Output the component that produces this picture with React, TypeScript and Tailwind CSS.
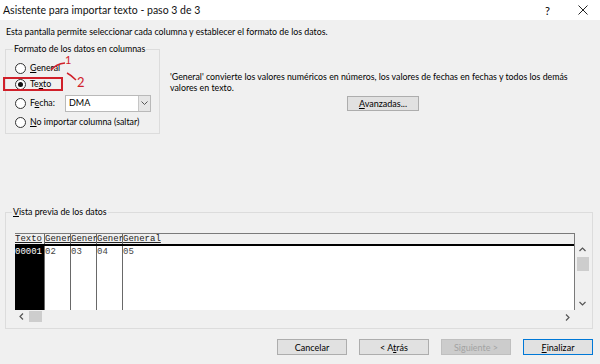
import React from "react";

const ui = { fontFamily: 'Lato, "Noto Sans", Arial, sans-serif' };
const mono = { fontFamily: '"Liberation Mono", "DejaVu Sans Mono", monospace' };

function Radio({ checked }: { checked?: boolean }) {
  return (
    <span className="w-[11px] h-[11px] rounded-full border border-[#333] bg-white flex items-center justify-center shrink-0">
      {checked && <span className="w-[5px] h-[5px] rounded-full bg-[#111]" />}
    </span>
  );
}

function Btn({ children, variant }: { children: React.ReactNode; variant?: "default" | "disabled" }) {
  const cls =
    variant === "default"
      ? "border-[#0078d7] bg-[#e1e1e1] text-black"
      : variant === "disabled"
      ? "border-[#bfbfbf] bg-[#cccccc] text-[#a3a3a3]"
      : "border-[#adadad] bg-[#e1e1e1] text-black";
  return (
    <div className={`w-[70px] h-[16px] border flex items-center justify-center text-[9px] leading-none whitespace-nowrap ${cls}`}>
      {children}
    </div>
  );
}

export default function App() {
  return (
    <div className="relative w-[600px] h-[364px] overflow-hidden text-black" style={ui}>
      {/* Title bar */}
      <div className="h-[20px] bg-white flex items-center justify-between pl-[3px] pr-[12px]">
        <span className="text-[10.5px] leading-none text-[#111]">Asistente para importar texto - paso 3 de 3</span>
        <div className="flex items-center gap-[28px]">
          <span className="text-[11px] leading-none">?</span>
          <svg width="10" height="10" viewBox="0 0 10 10">
            <path d="M0.5 0.5 L9.5 9.5 M9.5 0.5 L0.5 9.5" stroke="#222" strokeWidth="1" />
          </svg>
        </div>
      </div>

      {/* Body */}
      <div className="bg-[#f0f0f0] h-[344px] px-[5px] flex flex-col">
        <p className="mt-[6px] pl-[1px] text-[8.8px] leading-[12px] whitespace-nowrap">
          Esta pantalla permite seleccionar cada columna y establecer el formato de los datos.
        </p>

        <div className="flex mt-[5px]">
          <fieldset className="w-[155px] h-[91px] border border-[#dcdcdc] px-[6px] shrink-0">
            <legend className="ml-[1px] px-[1px] text-[8.8px] leading-[12px] whitespace-nowrap">Formato de los datos en columnas</legend>
            <div className="pt-[5px] text-[8.8px] whitespace-nowrap">
              <div className="h-[16px] flex items-center gap-[4px] pl-[3px]">
                <Radio />
                <span><u>G</u>eneral</span>
              </div>
              <div className="h-[16px] flex items-center gap-[4px] pl-[3px]">
                <Radio checked />
                <span>Te<u>x</u>to</span>
              </div>
              <div className="mt-[1px] h-[20px] flex items-center pl-[3px]">
                <div className="flex items-center gap-[4px] w-[50px]">
                  <Radio />
                  <span>F<u>e</u>cha:</span>
                </div>
                <div className="w-[86px] h-[17px] border border-[#b9b9b9] bg-white flex items-center">
                  <span className="flex-1 pl-[3px] text-[9px]">DMA</span>
                  <span className="w-[12px] h-full bg-[#e6e6e6] border-l border-[#c6c6c6] flex items-center justify-center">
                    <svg width="7" height="4" viewBox="0 0 7 4">
                      <path d="M0.5 0.5 L3.5 3.5 L6.5 0.5" stroke="#555" fill="none" strokeWidth="1" />
                    </svg>
                  </span>
                </div>
              </div>
              <div className="mt-[1px] h-[16px] flex items-center gap-[4px] pl-[3px]">
                <Radio />
                <span><u>N</u>o importar columna (saltar)</span>
              </div>
            </div>
          </fieldset>

          <div className="ml-[10px] mt-[28px] text-[8.8px] leading-[11px]">
            <p className="whitespace-nowrap">
              'General' convierte los valores numéricos en números, los valores de fechas en fechas y todos los demás
              <br />
              valores en texto.
            </p>
            <div className="mt-[3px] ml-[177px] w-[72px] h-[15px] border border-[#adadad] bg-[#e1e1e1] flex items-center justify-center text-[9px] leading-none">
              <span><u>A</u>vanzadas...</span>
            </div>
          </div>
        </div>

        {/* Preview */}
        <fieldset className="mt-[72px] w-[588px] h-[123px] border border-[#dcdcdc]">
          <legend className="ml-[6px] px-[1px] text-[8.8px] leading-[12px]"><u>V</u>ista previa de los datos</legend>
          <div className="pl-[9px] pt-[15px]">
            <div className="grid grid-cols-[560px_15px] grid-rows-[77px_12px]">
              {/* Table */}
              <div className="border-t border-r border-[#7a7a7a] flex flex-col bg-white overflow-hidden" style={mono}>
                <div className="h-[12px] flex bg-[#f0f0f0] border-b-2 border-black text-[9px] leading-[11px] text-[#222]">
                  <div className="w-[30px] overflow-hidden whitespace-nowrap border-r border-[#696969] underline">Texto</div>
                  <div className="w-[26px] overflow-hidden whitespace-nowrap border-r border-[#696969] underline">Gener</div>
                  <div className="w-[26px] overflow-hidden whitespace-nowrap border-r border-[#696969] underline">Gener</div>
                  <div className="w-[26px] overflow-hidden whitespace-nowrap border-r border-[#696969] underline">Gener</div>
                  <div className="flex-1 overflow-hidden whitespace-nowrap underline">General</div>
                </div>
                <div className="flex-1 flex text-[9px] leading-[12px]">
                  <div className="w-[30px] bg-black text-white border-r border-[#696969]">00001</div>
                  <div className="w-[26px] border-r border-[#696969] text-[#444]">02</div>
                  <div className="w-[26px] border-r border-[#696969] text-[#444]">03</div>
                  <div className="w-[26px] border-r border-[#696969] text-[#444]">04</div>
                  <div className="flex-1 text-[#444]">05</div>
                </div>
              </div>
              {/* Vertical scrollbar */}
              <div className="flex flex-col items-center pt-[12px]">
                <svg width="7" height="5" viewBox="0 0 7 5" className="mt-[2px]">
                  <path d="M0.5 4 L3.5 1 L6.5 4" stroke="#555" fill="none" strokeWidth="1.2" />
                </svg>
                <div className="mt-[5px] w-[12px] h-[14px] bg-[#cdcdcd]" />
                <div className="flex-1" />
                <svg width="7" height="5" viewBox="0 0 7 5" className="mb-[4px]">
                  <path d="M0.5 1 L3.5 4 L6.5 1" stroke="#555" fill="none" strokeWidth="1.2" />
                </svg>
              </div>
              {/* Horizontal scrollbar */}
              <div className="flex items-center">
                <svg width="5" height="7" viewBox="0 0 5 7" className="ml-[4px]">
                  <path d="M4 0.5 L1 3.5 L4 6.5" stroke="#555" fill="none" strokeWidth="1.2" />
                </svg>
                <div className="ml-[5px] w-[13px] h-[11px] bg-[#cdcdcd]" />
                <div className="flex-1" />
                <svg width="5" height="7" viewBox="0 0 5 7" className="mr-[5px] mt-[2px]">
                  <path d="M1 0.5 L4 3.5 L1 6.5" stroke="#555" fill="none" strokeWidth="1.2" />
                </svg>
              </div>
              <div />
            </div>
          </div>
        </fieldset>

        {/* Buttons */}
        <div className="mt-[10px] flex justify-end gap-[12px] pr-[2px]">
          <Btn>Cancelar</Btn>
          <Btn>
            <span>&lt; A<u>t</u>rás</span>
          </Btn>
          <Btn variant="disabled">
            <span>Siguiente &gt;</span>
          </Btn>
          <Btn variant="default">
            <span><u>F</u>inalizar</span>
          </Btn>
        </div>
      </div>

      {/* Red annotations */}
      <div className="absolute left-[3px] top-[77px] w-[60px] h-[14px] border-2 border-[#d0202a]" />
      <span className="absolute left-[65px] top-[54px] text-[11px] leading-[12px] text-[#d0202a]">1</span>
      <span className="absolute left-[77px] top-[75px] text-[13px] leading-[14px] text-[#d0202a]">2</span>
      <svg className="absolute left-0 top-0 pointer-events-none" width="100" height="100" viewBox="0 0 100 100">
        <path d="M51 70 Q56 64 65 63" stroke="#d0202a" strokeWidth="1.5" fill="none" />
        <path d="M67 73 Q71 75 76 80" stroke="#d0202a" strokeWidth="1.5" fill="none" />
      </svg>
    </div>
  );
}
